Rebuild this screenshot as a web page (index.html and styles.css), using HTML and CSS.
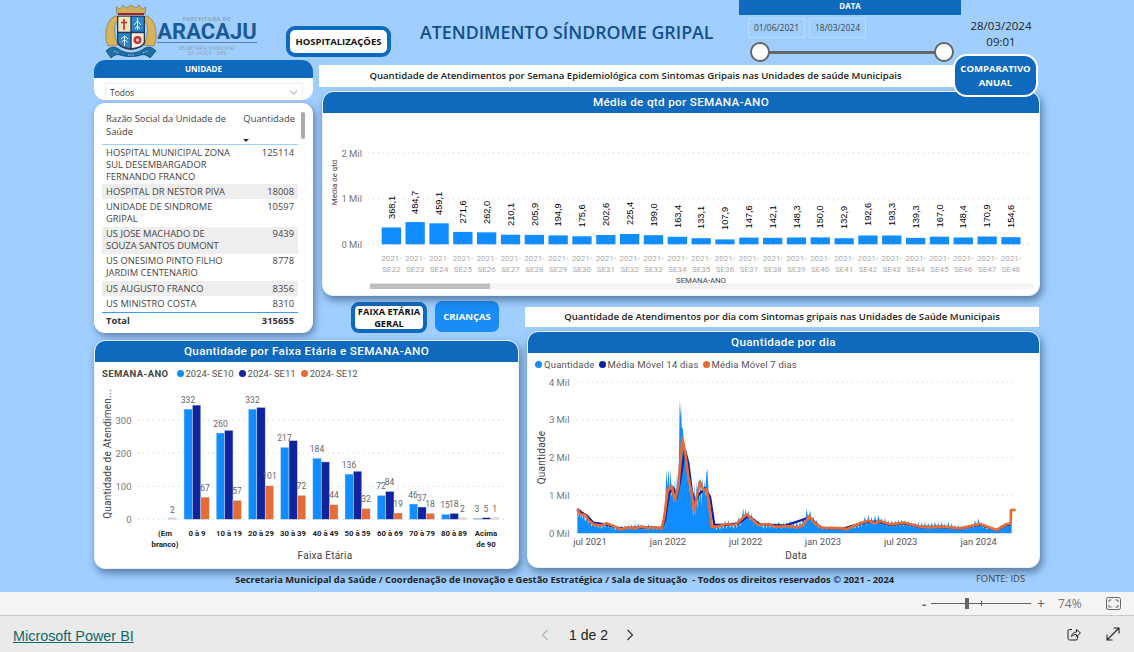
FILE: index.html
```html
<!DOCTYPE html>
<html lang="pt-BR">
<head>
<meta charset="utf-8">
<title>Atendimento Síndrome Gripal</title>
<link rel="stylesheet" href="styles.css">
</head>
<body>
<div class="report">
  <header class="top">
    <div class="logo">
      <svg class="crest" viewBox="0 0 52 54" aria-hidden="true">
        <path d="M3 42C-2 30 2 14 11 12c3 0 3 3 1 5-4 5-3 14 1 24z" fill="#d9b35a" stroke="#7a6a3a" stroke-width=".6"/>
        <path d="M49 42c5-12 1-28-8-30-3 0-3 3-1 5 4 5 3 14-1 24z" fill="#d9b35a" stroke="#7a6a3a" stroke-width=".6"/>
        <path d="M12 10 11 3l4 2 3-4 3 3 5-3 5 3 3-3 3 4 4-2-1 7z" fill="#cfae62" stroke="#6f5e30" stroke-width=".5"/>
        <rect x="13" y="9" width="26" height="2.4" fill="#8e2a2a"/>
        <path d="M12 12h28v26c0 4-6 7-14 8-8-1-14-4-14-8z" fill="#26384f"/>
        <rect x="13.3" y="12.7" width="12" height="15" fill="#f1e4c0"/>
        <rect x="26.7" y="12.7" width="12" height="15" fill="#2a86c8"/>
        <path d="M13.300 29.300h12v15c-6-1-12-3-12-7z" fill="#2a86c8"/>
        <path d="M26.700 29.300h12v8c0 4-6 6-12 7z" fill="#f6efe2"/>
        <path d="M19 15v11M16 18.500h6" stroke="#c8202a" stroke-width="1.500"/>
        <path d="M32.500 14v12M29 21l3.500-4 3.500 4M30 25l2.500-3 2.500 3" stroke="#eaf6ff" stroke-width="1" fill="none"/>
        <path d="M19.500 42V33M16 35l3.500-3 3.500 3M16.500 38l3-2 3 2" stroke="#eef6ee" stroke-width="1" fill="none"/>
        <circle cx="32.500" cy="36" r="4" fill="#c8323a"/>
        <circle cx="32.500" cy="36" r="1.500" fill="#f6efe2"/>
        <path d="M1 47c6-6 10-4 14-1 7 4 15 4 22 0 4-3 8-5 14 1l-6 7c-3-3-6-4-9-3-6 2-15 2-21 0-3-1-6 0-9 3z" fill="#1d6fa8" stroke="#123c63" stroke-width=".7"/>
        <path d="M9 47l5 2M23 51h6M38 49l5-2" stroke="#bcd7ea" stroke-width="1" stroke-dasharray="1 .8"/>
      </svg>
      <div class="wordmark">
        <span class="wm-pre">PREFEITURA DE</span>
        <span class="wm-name">ARACAJU</span>
        <span class="wm-sub">SECRETARIA MUNICIPAL<br>DA SAÚDE - SMS</span>
      </div>
    </div>
    <button class="btn-outline btn-hosp">HOSPITALIZAÇÕES</button>
    <h1 class="title">ATENDIMENTO SÍNDROME GRIPAL</h1>
    <div class="date-panel">
      <div class="date-head">DATA</div>
      <div class="date-inputs">
        <span class="date-box">01/06/2021</span>
        <span class="date-box">18/03/2024</span>
      </div>
      <div class="slider"><span class="knob"></span><span class="knob"></span></div>
    </div>
    <div class="clock">28/03/2024<br>09:01</div>
  </header>

  <main class="canvas">
    <section class="left-stack">
      <div class="slicer">
        <div class="slicer-head">UNIDADE</div>
        <div class="dropdown">
          <span>Todos</span>
          <svg class="chev" viewBox="0 0 10 6" aria-hidden="true"><path d="M.5.5 5 5 9.500.5" fill="none" stroke="#777" stroke-width=".9"/></svg>
        </div>
      </div>
      <div class="table-card">
        <div class="thead">
          <div class="c-name">Razão Social da Unidade de Saúde</div>
          <div class="c-qty">Quantidade<i class="caret"></i></div>
        </div>
        <div class="row"><div class="c-name">HOSPITAL MUNICIPAL ZONA SUL DESEMBARGADOR FERNANDO FRANCO</div><div class="c-num">125114</div></div>
        <div class="row alt"><div class="c-name">HOSPITAL DR NESTOR PIVA</div><div class="c-num">18008</div></div>
        <div class="row"><div class="c-name">UNIDADE DE SINDROME GRIPAL</div><div class="c-num">10597</div></div>
        <div class="row alt"><div class="c-name">US JOSE MACHADO DE SOUZA SANTOS DUMONT</div><div class="c-num">9439</div></div>
        <div class="row"><div class="c-name">US ONESIMO PINTO FILHO JARDIM CENTENARIO</div><div class="c-num">8778</div></div>
        <div class="row alt"><div class="c-name">US AUGUSTO FRANCO</div><div class="c-num">8356</div></div>
        <div class="row"><div class="c-name">US MINISTRO COSTA</div><div class="c-num">8310</div></div>
        <div class="row total"><div class="c-name">Total</div><div class="c-num">315655</div></div>
        <span class="scroll-thumb"></span>
      </div>
    </section>

    <section class="week-group">
      <div class="strip strip-week">Quantidade de Atendimentos por Semana Epidemiológica com Sintomas Gripais nas Unidades de saúde Municipais</div>
      <button class="btn-compare">COMPARATIVO<br>ANUAL</button>
      <article class="card card-week">
        <h2 class="card-head">Média de qtd por SEMANA-ANO</h2>
        <svg class="chart" viewBox="322 113 718 182" aria-label="Média de qtd por semana">
          <g class="grid">
            <path d="M368 153H1032M368 198.700H1032M368 244.300H1032"/>
          </g>
          <g class="tick" text-anchor="end">
            <text x="362" y="156.500">2 Mil</text><text x="362" y="202">1 Mil</text><text x="362" y="247.500">0 Mil</text>
          </g>
          <text class="axis-small" transform="rotate(-90 337 182.500)" x="337" y="182.500" text-anchor="middle">Média de qtd</text>
          <g class="bar-blue">
            <rect x="381.700" y="227.500" width="19.300" height="16.800"/><rect x="405.500" y="222.100" width="19.300" height="22.200"/><rect x="429.400" y="223.300" width="19.300" height="21"/><rect x="453.200" y="231.900" width="19.300" height="12.400"/><rect x="477" y="232.300" width="19.300" height="12"/><rect x="500.900" y="234.700" width="19.300" height="9.600"/><rect x="524.700" y="234.900" width="19.300" height="9.400"/><rect x="548.500" y="235.400" width="19.300" height="8.900"/><rect x="572.300" y="236.300" width="19.300" height="8"/><rect x="596.200" y="235" width="19.300" height="9.300"/><rect x="620" y="234" width="19.300" height="10.300"/><rect x="643.800" y="235.200" width="19.300" height="9.100"/><rect x="667.700" y="236.800" width="19.300" height="7.500"/><rect x="691.500" y="238.200" width="19.300" height="6.100"/><rect x="715.300" y="239.400" width="19.300" height="4.900"/><rect x="739.200" y="237.600" width="19.300" height="6.700"/><rect x="763" y="237.800" width="19.300" height="6.500"/><rect x="786.800" y="237.500" width="19.300" height="6.800"/><rect x="810.600" y="237.400" width="19.300" height="6.900"/><rect x="834.500" y="238.200" width="19.300" height="6.100"/><rect x="858.300" y="235.500" width="19.300" height="8.800"/><rect x="882.100" y="235.500" width="19.300" height="8.800"/><rect x="906" y="237.900" width="19.300" height="6.400"/><rect x="929.800" y="236.700" width="19.300" height="7.600"/><rect x="953.600" y="237.500" width="19.300" height="6.800"/><rect x="977.500" y="236.500" width="19.300" height="7.800"/><rect x="1001.300" y="237.200" width="19.300" height="7.100"/>
          </g>
          <g class="val-rot">
            <text x="394.500" y="219" transform="rotate(-90 394.500 219)">368,1</text>
            <text x="418.300" y="214" transform="rotate(-90 418.300 214)">484,7</text>
            <text x="442.200" y="215" transform="rotate(-90 442.200 215)">459,1</text>
            <text x="466" y="223.500" transform="rotate(-90 466 223.500)">271,6</text>
            <text x="489.800" y="224" transform="rotate(-90 489.800 224)">262,0</text>
            <text x="513.700" y="226" transform="rotate(-90 513.700 226)">210,1</text>
            <text x="537.500" y="226" transform="rotate(-90 537.500 226)">205,9</text>
            <text x="561.300" y="226.500" transform="rotate(-90 561.300 226.500)">194,9</text>
            <text x="585.100" y="227.500" transform="rotate(-90 585.100 227.500)">175,6</text>
            <text x="609" y="226" transform="rotate(-90 609 226)">202,6</text>
            <text x="632.800" y="225" transform="rotate(-90 632.800 225)">225,4</text>
            <text x="656.600" y="226.500" transform="rotate(-90 656.600 226.500)">199,0</text>
            <text x="680.500" y="228" transform="rotate(-90 680.500 228)">163,4</text>
            <text x="704.300" y="229" transform="rotate(-90 704.300 229)">133,1</text>
            <text x="728.100" y="230" transform="rotate(-90 728.100 230)">107,9</text>
            <text x="752" y="228.500" transform="rotate(-90 752 228.500)">147,6</text>
            <text x="775.800" y="228.500" transform="rotate(-90 775.800 228.500)">142,1</text>
            <text x="799.600" y="228.500" transform="rotate(-90 799.600 228.500)">148,3</text>
            <text x="823.400" y="228.500" transform="rotate(-90 823.400 228.500)">150,0</text>
            <text x="847.300" y="229" transform="rotate(-90 847.300 229)">132,9</text>
            <text x="871.100" y="226" transform="rotate(-90 871.100 226)">192,6</text>
            <text x="894.900" y="226" transform="rotate(-90 894.900 226)">193,3</text>
            <text x="918.800" y="228.500" transform="rotate(-90 918.800 228.500)">139,3</text>
            <text x="942.600" y="227.500" transform="rotate(-90 942.600 227.500)">167,0</text>
            <text x="966.400" y="228.500" transform="rotate(-90 966.400 228.500)">148,4</text>
            <text x="990.300" y="227.500" transform="rotate(-90 990.300 227.500)">170,9</text>
            <text x="1014.100" y="228" transform="rotate(-90 1014.100 228)">154,6</text>
          </g>
          <g class="cat-week" text-anchor="middle">
            <text x="391.300" y="261">2021-</text><text x="391.300" y="272">SE22</text>
            <text x="415.100" y="261">2021-</text><text x="415.100" y="272">SE23</text>
            <text x="439" y="261">2021-</text><text x="439" y="272">SE24</text>
            <text x="462.800" y="261">2021-</text><text x="462.800" y="272">SE25</text>
            <text x="486.600" y="261">2021-</text><text x="486.600" y="272">SE26</text>
            <text x="510.500" y="261">2021-</text><text x="510.500" y="272">SE27</text>
            <text x="534.300" y="261">2021-</text><text x="534.300" y="272">SE28</text>
            <text x="558.100" y="261">2021-</text><text x="558.100" y="272">SE29</text>
            <text x="581.900" y="261">2021-</text><text x="581.900" y="272">SE30</text>
            <text x="605.800" y="261">2021-</text><text x="605.800" y="272">SE31</text>
            <text x="629.600" y="261">2021-</text><text x="629.600" y="272">SE32</text>
            <text x="653.400" y="261">2021-</text><text x="653.400" y="272">SE33</text>
            <text x="677.300" y="261">2021-</text><text x="677.300" y="272">SE34</text>
            <text x="701.100" y="261">2021-</text><text x="701.100" y="272">SE35</text>
            <text x="724.900" y="261">2021-</text><text x="724.900" y="272">SE36</text>
            <text x="748.800" y="261">2021-</text><text x="748.800" y="272">SE37</text>
            <text x="772.600" y="261">2021-</text><text x="772.600" y="272">SE38</text>
            <text x="796.400" y="261">2021-</text><text x="796.400" y="272">SE39</text>
            <text x="820.200" y="261">2021-</text><text x="820.200" y="272">SE40</text>
            <text x="844.100" y="261">2021-</text><text x="844.100" y="272">SE41</text>
            <text x="867.900" y="261">2021-</text><text x="867.900" y="272">SE42</text>
            <text x="891.700" y="261">2021-</text><text x="891.700" y="272">SE43</text>
            <text x="915.600" y="261">2021-</text><text x="915.600" y="272">SE44</text>
            <text x="939.400" y="261">2021-</text><text x="939.400" y="272">SE45</text>
            <text x="963.200" y="261">2021-</text><text x="963.200" y="272">SE46</text>
            <text x="987.100" y="261">2021-</text><text x="987.100" y="272">SE47</text>
            <text x="1010.900" y="261">2021-</text><text x="1010.900" y="272">SE48</text>
          </g>
          <text class="axis-small" x="701" y="282.500" text-anchor="middle">SEMANA-ANO</text>
          <rect class="track" x="369.500" y="283.500" width="663.500" height="5.500"/>
          <rect class="thumb" x="370" y="283.500" width="120" height="5.500"/>
        </svg>
      </article>
    </section>

    <div class="btn-row">
      <button class="btn-outline btn-faixa">FAIXA ETÁRIA<br>GERAL</button>
      <button class="btn-fill">CRIANÇAS</button>
    </div>
    <div class="strip strip-day">Quantidade de Atendimentos por dia com Sintomas gripais nas Unidades de Saúde Municipais</div>

    <article class="card card-age">
      <h2 class="card-head">Quantidade por Faixa Etária e SEMANA-ANO</h2>
      <div class="legend legend-age">
        <strong>SEMANA-ANO</strong>
        <span class="lg"><i class="dot d-blue"></i>2024- SE10</span>
        <span class="lg"><i class="dot d-navy"></i>2024- SE11</span>
        <span class="lg"><i class="dot d-orange"></i>2024- SE12</span>
      </div>
      <svg class="chart" viewBox="94 385 425 184" aria-label="Quantidade por faixa etária">
        <g class="grid"><path d="M138 421H508M138 454H508M138 487.300H508M138 520.300H508"/></g>
        <g class="tick" text-anchor="end">
          <text x="131.500" y="424.500">300</text><text x="131.500" y="457.500">200</text><text x="131.500" y="490.800">100</text><text x="131.500" y="523.800">0</text>
        </g>
        <text class="axis-title" x="110.500" y="455" transform="rotate(-90 110.500 455)" text-anchor="middle">Quantidade de Atendimen...</text>
        <g class="bar-blue bar-line">
          <rect x="184" y="410.100" width="8.400" height="110.200"/><rect x="216.200" y="434" width="8.400" height="86.300"/><rect x="248.400" y="410.100" width="8.400" height="110.200"/><rect x="280.600" y="448.300" width="8.400" height="72"/><rect x="312.800" y="459.200" width="8.400" height="61.100"/><rect x="345" y="475.100" width="8.400" height="45.200"/><rect x="377.200" y="496.400" width="8.400" height="23.900"/><rect x="409.400" y="505" width="8.400" height="15.300"/><rect x="441.600" y="515.300" width="8.400" height="5"/><rect x="473.800" y="519.300" width="8.400" height="1"/>
        </g>
        <g class="bar-navy bar-line">
          <rect x="192.400" y="406.100" width="8.400" height="114.200"/><rect x="224.600" y="431.300" width="8.400" height="89"/><rect x="256.800" y="408.400" width="8.400" height="111.900"/><rect x="289" y="441.600" width="8.400" height="78.700"/><rect x="321.200" y="462.900" width="8.400" height="57.400"/><rect x="353.400" y="472.200" width="8.400" height="48.100"/><rect x="385.600" y="492.400" width="8.400" height="27.900"/><rect x="417.800" y="508" width="8.400" height="12.300"/><rect x="450" y="514.300" width="8.400" height="6"/><rect x="482.200" y="518.600" width="8.400" height="1.700"/>
        </g>
        <g class="bar-orange bar-line">
          <rect class="faint" x="168.200" y="518.800" width="8.400" height="1.500"/><rect x="200.800" y="498.100" width="8.400" height="22.200"/><rect x="233" y="501.400" width="8.400" height="18.900"/><rect x="265.200" y="486.800" width="8.400" height="33.500"/><rect x="297.400" y="496.400" width="8.400" height="23.900"/><rect x="329.600" y="505.700" width="8.400" height="14.600"/><rect x="361.800" y="509.700" width="8.400" height="10.600"/><rect x="394" y="514" width="8.400" height="6.300"/><rect x="426.200" y="514.300" width="8.400" height="6"/><rect class="faint" x="458.400" y="518.800" width="8.400" height="1.500"/><rect class="faint" x="490.600" y="518.800" width="8.400" height="1.500"/>
        </g>
        <g class="val" text-anchor="middle">
          <text x="172.500" y="514">2</text>
          <text x="188" y="404">332</text><text x="205" y="491.500">67</text>
          <text x="220.500" y="428">260</text><text x="237" y="494.500">57</text>
          <text x="252.500" y="404">332</text><text x="269.500" y="480">101</text>
          <text x="284.500" y="442">217</text><text x="301.500" y="490">72</text>
          <text x="317" y="453">184</text><text x="334" y="499">44</text>
          <text x="349" y="468.500">136</text><text x="366" y="503">32</text>
          <text x="381" y="490">72</text><text x="389.500" y="486">84</text><text x="398" y="507.500">19</text>
          <text x="413" y="498.500">46</text><text x="421.700" y="501.500">37</text><text x="430" y="507.500">18</text>
          <text x="445" y="508.500">15</text><text x="453.700" y="507.500">18</text><text x="462.300" y="513">2</text>
          <text x="477" y="512.500">3</text><text x="486" y="512.500">5</text><text x="494.700" y="513">1</text>
        </g>
        <g class="cat-age" text-anchor="middle">
          <text x="165" y="537">(Em</text><text x="165" y="548">branco)</text>
          <text x="197" y="537">0 à 9</text><text x="229" y="537">10 à 19</text><text x="261" y="537">20 à 29</text><text x="293" y="537">30 à 39</text><text x="325.500" y="537">40 à 49</text><text x="357.500" y="537">50 à 59</text><text x="390" y="537">60 à 69</text><text x="422" y="537">70 à 79</text><text x="454" y="537">80 à 89</text>
          <text x="486" y="537">Acima</text><text x="486" y="548">de 90</text>
        </g>
        <text class="axis-title" x="325" y="559.500" text-anchor="middle">Faixa Etária</text>
      </svg>
    </article>

    <article class="card card-day">
      <h2 class="card-head">Quantidade por dia</h2>
      <div class="legend legend-day">
        <span class="lg"><i class="dot d-blue"></i>Quantidade</span>
        <span class="lg"><i class="dot d-navy"></i>Média Móvel 14 dias</span>
        <span class="lg"><i class="dot d-orange"></i>Média Móvel 7 dias</span>
      </div>
      <svg class="chart" viewBox="527 376 513 191" aria-label="Quantidade por dia">
        <g class="grid"><path d="M577 382H1013M577 419.700H1013M577 457.700H1013M577 495.300H1013"/></g>
        <g class="tick" text-anchor="end">
          <text x="569.500" y="385.500">4 Mil</text><text x="569.500" y="423.200">3 Mil</text><text x="569.500" y="461.200">2 Mil</text><text x="569.500" y="498.800">1 Mil</text><text x="569.500" y="536.800">0 Mil</text>
        </g>
        <text class="axis-title" x="544.500" y="457.500" transform="rotate(-90 544.500 457.500)" text-anchor="middle">Quantidade</text>
        <g transform="translate(525 330) scale(.33333)">
          <path class="area" d="M157 610V535L160 560 163 540 166 565 170 536 173 570 176 540 180 575 185 560 190 580 195 568 200 590 205 575 210 592 215 578 220 595 225 578 230 597 235 576 240 594 245 575 250 595 255 578 260 597 265 582 270 600 280 590 285 602 290 585 295 600 300 585 305 600 310 585 315 600 320 583 325 598 330 583 335 597 340 580 345 597 350 582 355 600 360 585 365 600 370 582 375 598 380 585 385 600 390 585 395 600 400 590 405 600 410 590 415 570 418 530 420 545 424 420 427 470 431 418 434 480 437 418 440 500 444 470 447 520 450 445 453 520 456 425 459 480 462 375 464 210 466 260 468 215 470 290 473 295 476 330 479 355 482 380 485 400 488 450 490 420 493 490 496 450 499 480 502 520 505 560 508 455 511 560 514 450 517 540 520 440 523 520 526 440 529 530 532 440 535 490 538 450 541 500 544 430 547 416 550 470 553 560 556 540 560 590 570 588 575 600 580 580 585 600 590 578 595 598 600 570 605 598 610 570 615 595 620 575 625 598 630 575 635 595 640 560 645 590 650 565 655 535 658 575 662 532 665 570 670 540 675 572 680 550 685 578 690 565 695 585 700 572 705 590 710 578 715 597 720 578 725 595 730 575 735 595 740 578 745 597 750 578 755 598 760 575 765 585 770 597 775 578 780 595 785 575 790 595 795 570 800 597 805 575 810 598 815 572 820 595 825 575 830 590 835 560 840 585 845 535 850 570 855 540 860 575 865 560 870 585 875 570 880 595 885 585 890 600 900 590 905 600 915 590 920 600 930 590 935 600 945 590 950 600 960 592 965 600 975 585 980 597 985 580 990 597 995 578 1000 595 1005 570 1010 590 1015 575 1020 560 1025 585 1030 555 1035 580 1040 560 1045 585 1050 555 1055 580 1060 555 1065 575 1070 565 1075 585 1080 565 1085 590 1090 570 1095 590 1100 570 1105 590 1110 570 1115 590 1120 568 1125 590 1130 568 1135 590 1140 570 1145 588 1150 572 1155 592 1160 575 1165 595 1170 575 1175 595 1180 575 1185 597 1190 577 1195 597 1200 577 1205 597 1210 578 1215 598 1220 577 1225 595 1230 575 1235 597 1240 577 1245 595 1250 575 1255 595 1260 580 1265 597 1270 575 1275 597 1280 580 1285 598 1290 585 1295 600 1300 585 1305 600 1310 588 1315 600 1320 585 1325 600 1330 585 1335 597 1340 580 1345 597 1350 570 1355 590 1360 565 1365 590 1370 575 1375 595 1380 585 1385 598 1395 592 1400 600 1410 595 1415 602 1425 590 1430 585 1435 595 1440 580 1445 590 1450 575 1455 585 1460 585V610z"/>
          <path class="line-navy" d="M157 537 170 548 185 556 205 578 240 583 285 595 350 592 410 594 420 570 432 490 445 475 455 500 465 455 480 360 490 400 500 480 510 520 520 495 540 475 555 500 568 585 600 585 640 580 670 558 705 583 780 587 855 562 875 582 890 594 955 596 1005 582 1030 575 1065 576 1095 585 1140 580 1185 591 1255 591 1305 596 1365 584 1415 600 1445 584 1458 584"/>
          <path class="line-orange" d="M157 537 165 552 180 555 190 570 205 583 225 587 245 580 265 588 285 598 310 592 330 595 350 590 370 594 390 592 410 595 418 560 428 480 440 468 450 510 460 470 472 325 480 365 490 440 500 490 508 545 515 500 525 455 535 480 545 478 552 520 560 590 580 590 600 582 630 585 665 553 700 585 730 582 750 590 765 590 795 588 815 593 835 585 853 558 870 580 890 593 955 595 965 598 1005 580 1030 572 1050 580 1065 573 1095 583 1140 578 1185 590 1215 592 1255 590 1305 595 1365 582 1415 600 1445 582 1457 582 1458 540 1472 540"/>
        </g>
        <g class="date-tick" text-anchor="middle">
          <text x="590" y="545">jul 2021</text><text x="668" y="545">jan 2022</text><text x="745.700" y="545">jul 2022</text><text x="823" y="545">jan 2023</text><text x="900.700" y="545">jul 2023</text><text x="978.700" y="545">jan 2024</text>
        </g>
        <text class="axis-title" x="796" y="559" text-anchor="middle">Data</text>
      </svg>
    </article>
  </main>

  <footer class="report-foot">
    <span class="foot-main">Secretaria Municipal da Saúde / Coordenação de Inovação e Gestão Estratégica / Sala de Situação &nbsp;- Todos os direitos reservados © 2021 - 2024</span>
    <span class="foot-src">FONTE: IDS</span>
  </footer>
</div>

<div class="zoombar">
  <span class="z-minus">-</span>
  <span class="z-track"><i class="z-tick"></i><i class="z-thumb"></i></span>
  <span class="z-plus">+</span>
  <span class="z-pct">74%</span>
  <svg class="z-fit" viewBox="0 0 15 13" aria-hidden="true">
    <rect x=".5" y=".5" width="14" height="12" rx="2" fill="none" stroke="#666"/>
    <path d="M3 5V3h2.500M12 5V3H9.500M3 8v2h2.500M12 8v2H9.500" fill="none" stroke="#666"/>
  </svg>
</div>
<nav class="pbi-bar">
  <a class="pbi-link" href="#">Microsoft Power BI</a>
  <div class="pager">
    <svg class="pg-chev" viewBox="0 0 8 12" aria-hidden="true"><path d="M6.500 1 1.500 6l5 5" fill="none" stroke="#b5b5b5" stroke-width="1.200"/></svg>
    <span class="pg-text">1 de 2</span>
    <svg class="pg-chev" viewBox="0 0 8 12" aria-hidden="true"><path d="M1.500 1l5 5-5 5" fill="none" stroke="#333" stroke-width="1.200"/></svg>
  </div>
  <div class="pbi-actions">
    <svg class="act" viewBox="0 0 14 14" aria-hidden="true"><path d="M5 2.500H2.500a1.500 1.500 0 0 0-1.500 1.500v7.500A1.500 1.500 0 0 0 2.500 13H9a1.500 1.500 0 0 0 1.500-1.500V9" fill="none" stroke="#222"/><path d="M4.500 9.500C5 6.500 7 5 9.500 5V2.500L13.500 6l-4 3.500V7.500C7.500 7.500 6 8 4.500 9.500z" fill="none" stroke="#222" stroke-linejoin="round"/></svg>
    <svg class="act" viewBox="0 0 14 14" aria-hidden="true"><path d="M1.500 12.500 12.500 1.500M7.500 1h5.500v5.500M1 7.500V13h5.500" fill="none" stroke="#222" stroke-width="1.100"/></svg>
  </div>
</nav>
</body>
</html>
```

FILE: styles.css
```css
* { box-sizing: border-box; }
html, body { margin: 0; padding: 0; }
body {
  width: 1134px;
  height: 652px;
  overflow: hidden;
  font-family: "Open Sans", "Liberation Sans", sans-serif;
  background: #eaeaea;
}
button { font-family: inherit; cursor: pointer; padding: 0; }
h1, h2 { margin: 0; }

.report {
  height: 592px;
  background: #a0cfff;
  overflow: hidden;
}

/* top band */
.top {
  height: 60px;
  display: flex;
  align-items: flex-start;
  padding-left: 105px;
}
.logo { width: 152px; height: 60px; display: flex; padding-top: 4px; }
.crest { width: 52px; height: 54px; flex: none; }
.wordmark {
  display: flex;
  flex-direction: column;
  align-items: center;
  flex: none;
  width: 100px;
  margin-top: 12px;
  color: #8b98a6;
}
.wm-pre { font-size: 5.500px; line-height: 7px; letter-spacing: .6px; font-weight: 600; }
.wm-name {
  font-family: Roboto, sans-serif;
  font-size: 22px;
  line-height: 17px;
  font-weight: 700;
  color: #1b5a95;
  width: 100%;
  text-align: center;
  border-bottom: 1px solid #5b83a8;
  padding-bottom: 2px;
  box-sizing: content-box;
}
.wm-sub { font-size: 4.500px; line-height: 5px; text-align: center; margin-top: 3px; letter-spacing: .3px; }

.btn-outline {
  background: #fff;
  border: 4px solid #0f69bd;
  color: #111;
  font-weight: 700;
}
.btn-hosp {
  width: 105px;
  height: 31px;
  margin: 26px 0 0 29px;
  border-radius: 9px;
  font-size: 9.500px;
}
.title {
  margin: 20px 0 0 29px;
  width: 319px;
  font-size: 17.800px;
  line-height: 25px;
  font-weight: 600;
  color: #124f8d;
  white-space: nowrap;
}
.date-panel { width: 222px; }
.date-head {
  height: 15px;
  background: #0f69bd;
  color: #fff;
  font-size: 8px;
  font-weight: 700;
  line-height: 11px;
  text-align: center;
}
.date-inputs { display: flex; gap: 4px; padding: 3px 0 0 9px; }
.date-box {
  width: 57px;
  height: 20px;
  border: 1px solid #bcdcfb;
  font-size: 8.500px;
  line-height: 18px;
  text-align: center;
  color: #444;
}
.slider {
  position: relative;
  display: flex;
  justify-content: space-between;
  margin: 4px 7px 0 11px;
  height: 20px;
  align-items: center;
}
.slider::before {
  content: "";
  position: absolute;
  left: 8px;
  right: 8px;
  top: 8.500px;
  height: 3px;
  background: #666;
}
.knob {
  position: relative;
  width: 20px;
  height: 20px;
  border-radius: 50%;
  background: #fff;
  border: 2px solid #666;
}
.clock {
  width: 80px;
  padding-top: 18px;
  text-align: center;
  font-size: 11.500px;
  line-height: 16px;
  color: #222;
}

/* canvas grid */
.canvas {
  display: grid;
  width: 1040px;
  padding-left: 94px;
  grid-template-columns: 219px 206px 8px 513px;
  grid-template-rows: 241px 30px 9px 229px;
}

.left-stack {
  grid-column: 1;
  grid-row: 1 / 4;
  display: flex;
  flex-direction: column;
  gap: 3px;
  align-items: stretch;
}
.slicer {
  height: 40px;
  background: #fff;
  border-radius: 11px;
  overflow: hidden;
}
.slicer-head {
  height: 18px;
  background: #0f69bd;
  color: #fff;
  font-size: 8px;
  font-weight: 700;
  line-height: 18px;
  text-align: center;
}
.dropdown {
  display: flex;
  align-items: center;
  justify-content: space-between;
  margin: 5px 10px 0 11px;
  height: 17px;
  padding: 0 4px;
  border: 1px solid #eee;
  border-bottom: 0;
  font-size: 8.500px;
  color: #333;
}
.chev { width: 9px; height: 5px; }

.table-card {
  position: relative;
  height: 230px;
  padding: 7px 15px 0 8px;
  background: #fff;
  border-radius: 11px;
  box-shadow: 2px 3px 7px rgba(35, 60, 95, .55);
  font-size: 9.400px;
  color: #444;
}
.thead {
  display: flex;
  height: 35px;
  border-bottom: 1px solid #9fcfff;
  line-height: 13px;
  padding-top: 2px;
}
.c-name { width: 136px; padding: 0 4px; flex: none; }
.c-qty { position: relative; flex: 1; text-align: right; padding-right: 3px; white-space: nowrap; }
.c-num { flex: 1; text-align: right; padding-right: 4px; }
.caret {
  position: absolute;
  left: 5px;
  top: 27px;
  border: 3px solid transparent;
  border-top: 3.500px solid #333;
  border-bottom: 0;
}
.row { display: flex; line-height: 12px; padding: 1.600px 0; }
.row.alt { background: #eeeeee; }
.row.total {
  border-top: 1px solid #3d9df5;
  font-weight: 700;
  color: #333;
  padding-top: 2px;
  margin-top: .5px;
}
.scroll-thumb {
  position: absolute;
  top: 9px;
  right: 8.500px;
  width: 4px;
  height: 27px;
  border-radius: 2px;
  background: #aaa;
}

.week-group {
  position: relative;
  grid-column: 2 / 5;
  grid-row: 1;
  padding-top: 5px;
}
.strip {
  background: #fff;
  font-size: 9.600px;
  font-weight: 600;
  color: #222;
  text-align: center;
  white-space: nowrap;
}
.strip-week {
  margin: 0 80px 0 6px;
  height: 22px;
  line-height: 21px;
  padding-right: 8px;
}
.btn-compare {
  position: absolute;
  top: -6px;
  right: 2px;
  z-index: 2;
  width: 85px;
  height: 43px;
  border: 2px solid #fff;
  border-radius: 14px;
  background: #0f69bd;
  color: #fff;
  font-size: 9.500px;
  font-weight: 700;
  line-height: 14px;
}

.card {
  display: flex;
  flex-direction: column;
  background: #fff;
  border: 1px solid #e6f2ff;
  border-radius: 11px;
  overflow: hidden;
  box-shadow: 2px 4px 9px rgba(35, 60, 95, .6);
}
.card-head {
  flex: none;
  height: 21px;
  line-height: 21px;
  background: #0f69bd;
  color: #fff;
  font-family: Roboto, sans-serif;
  font-size: 11.700px;
  font-weight: 500;
  text-align: center;
  letter-spacing: .33px;
}
.chart { display: block; flex: none; margin-left: -1px; }

.card-week { margin: 4px 0 0 9px; width: 718px; height: 205px; }
.card-week .chart { width: 718px; height: 182px; }

.btn-row {
  grid-column: 2;
  grid-row: 2;
  display: flex;
  gap: 8px;
  padding-left: 38px;
  align-items: flex-start;
}
.btn-faixa {
  width: 76px;
  height: 31px;
  margin-top: 1px;
  border-radius: 8px;
  font-size: 9.300px;
  line-height: 11.500px;
}
.btn-fill {
  width: 64px;
  height: 31px;
  border: 0;
  border-radius: 7px;
  background: #198cf5;
  color: #fff;
  font-size: 9.500px;
  font-weight: 700;
}
.strip-day {
  grid-column: 3 / 5;
  grid-row: 2;
  margin: 6px 1px 0 6px;
  height: 20px;
  line-height: 20px;
}

.card-age { grid-column: 1 / 3; grid-row: 4; height: 229px; }
.card-age .chart { width: 425px; height: 184px; }
.card-day { grid-column: 4; grid-row: 3 / 5; height: 237px; }
.card-day .chart { width: 513px; height: 191px; }

.legend {
  display: flex;
  align-items: center;
  flex: none;
  font-family: Roboto, sans-serif;
  font-size: 9.500px;
  color: #555;
}
.legend-age { height: 22px; padding-left: 7px; gap: 5px; }
.legend-age strong { color: #444; font-weight: 700; margin-right: 3px; letter-spacing: .4px; }
.legend-day { height: 23px; padding-left: 7px; gap: 4px; letter-spacing: .2px; }
.lg { display: flex; align-items: center; gap: 2px; }
.dot { width: 7px; height: 7px; border-radius: 50%; }
.d-blue { background: #118dff; }
.d-navy { background: #12239e; }
.d-orange { background: #e66c37; }

.grid path { fill: none; stroke: #cfcfcf; stroke-width: 1; stroke-dasharray: 1 4; }
.tick text { font-family: Roboto, sans-serif; font-size: 9.500px; fill: #777; }
.axis-small { font-family: Roboto, sans-serif; font-size: 7.800px; fill: #444; }
.axis-title { font-family: Roboto, sans-serif; font-size: 10px; fill: #444; letter-spacing: .25px; }
.bar-blue rect { fill: #118dff; }
.bar-navy rect { fill: #12239e; }
.bar-orange rect { fill: #e66c37; }
.bar-orange rect.faint { fill: #f5c9b4; }
.bar-line rect { stroke: #c9ddf5; stroke-width: .5; }
.val-rot text { font-family: "Liberation Sans", sans-serif; font-size: 9.300px; fill: #000; }
.val text { font-family: Roboto, sans-serif; font-size: 8.500px; fill: #666; }
.cat-week text { font-family: Roboto, sans-serif; font-size: 8px; fill: #aaa; }
.cat-age text { font-family: Roboto, sans-serif; font-size: 7.800px; font-weight: 700; fill: #222; }
.date-tick text { font-family: Roboto, sans-serif; font-size: 9.500px; fill: #555; }
.track { fill: #f3f3f3; }
.thumb { fill: #bfbfbf; }
.area { fill: #118dff; }
.line-navy { fill: none; stroke: #12239e; stroke-width: 7; }
.line-orange { fill: none; stroke: #e66c37; stroke-width: 8; stroke-linejoin: round; }

.report-foot {
  display: flex;
  height: 22px;
  margin-top: 1px;
  align-items: flex-start;
  font-size: 9.400px;
  color: #222;
}
.foot-main {
  margin-left: 235px;
  width: 741px;
  flex: none;
  font-weight: 700;
  line-height: 19px;
  white-space: nowrap;
}
.foot-src { line-height: 17px; color: #444; white-space: nowrap; }

/* viewer bars */
.zoombar {
  display: flex;
  align-items: center;
  height: 24px;
  padding-left: 922px;
  background: #f4f4f4;
  border-bottom: 1px solid #c8c8c8;
  color: #666;
}
.z-minus { width: 9px; font-size: 13px; font-weight: 700; }
.z-track { position: relative; width: 100px; height: 1px; background: #666; }
.z-tick { position: absolute; left: 50px; top: -2px; width: 1px; height: 5px; background: #666; }
.z-thumb { position: absolute; left: 34px; top: -5px; width: 4px; height: 11px; background: #666; }
.z-plus { margin-left: 6px; width: 21px; font-size: 14px; }
.z-pct { width: 48px; font-size: 12px; color: #777; }
.z-fit { width: 15px; height: 13px; }

.pbi-bar {
  display: flex;
  align-items: center;
  height: 36px;
  padding-left: 13px;
  background: #eaeaea;
}
.pbi-link {
  width: 528px;
  padding-top: 3px;
  font-family: "Liberation Sans", sans-serif;
  font-size: 14.400px;
  color: #0b6a6a;
}
.pager { display: flex; align-items: center; width: 526px; gap: 20px; padding-top: 1px; }
.pg-chev { width: 8px; height: 12px; }
.pg-text { font-family: "Liberation Sans", sans-serif; font-size: 14px; color: #222; width: 37px; white-space: nowrap; }
.pbi-actions { display: flex; gap: 25px; }
.act { width: 14px; height: 14px; }
```
